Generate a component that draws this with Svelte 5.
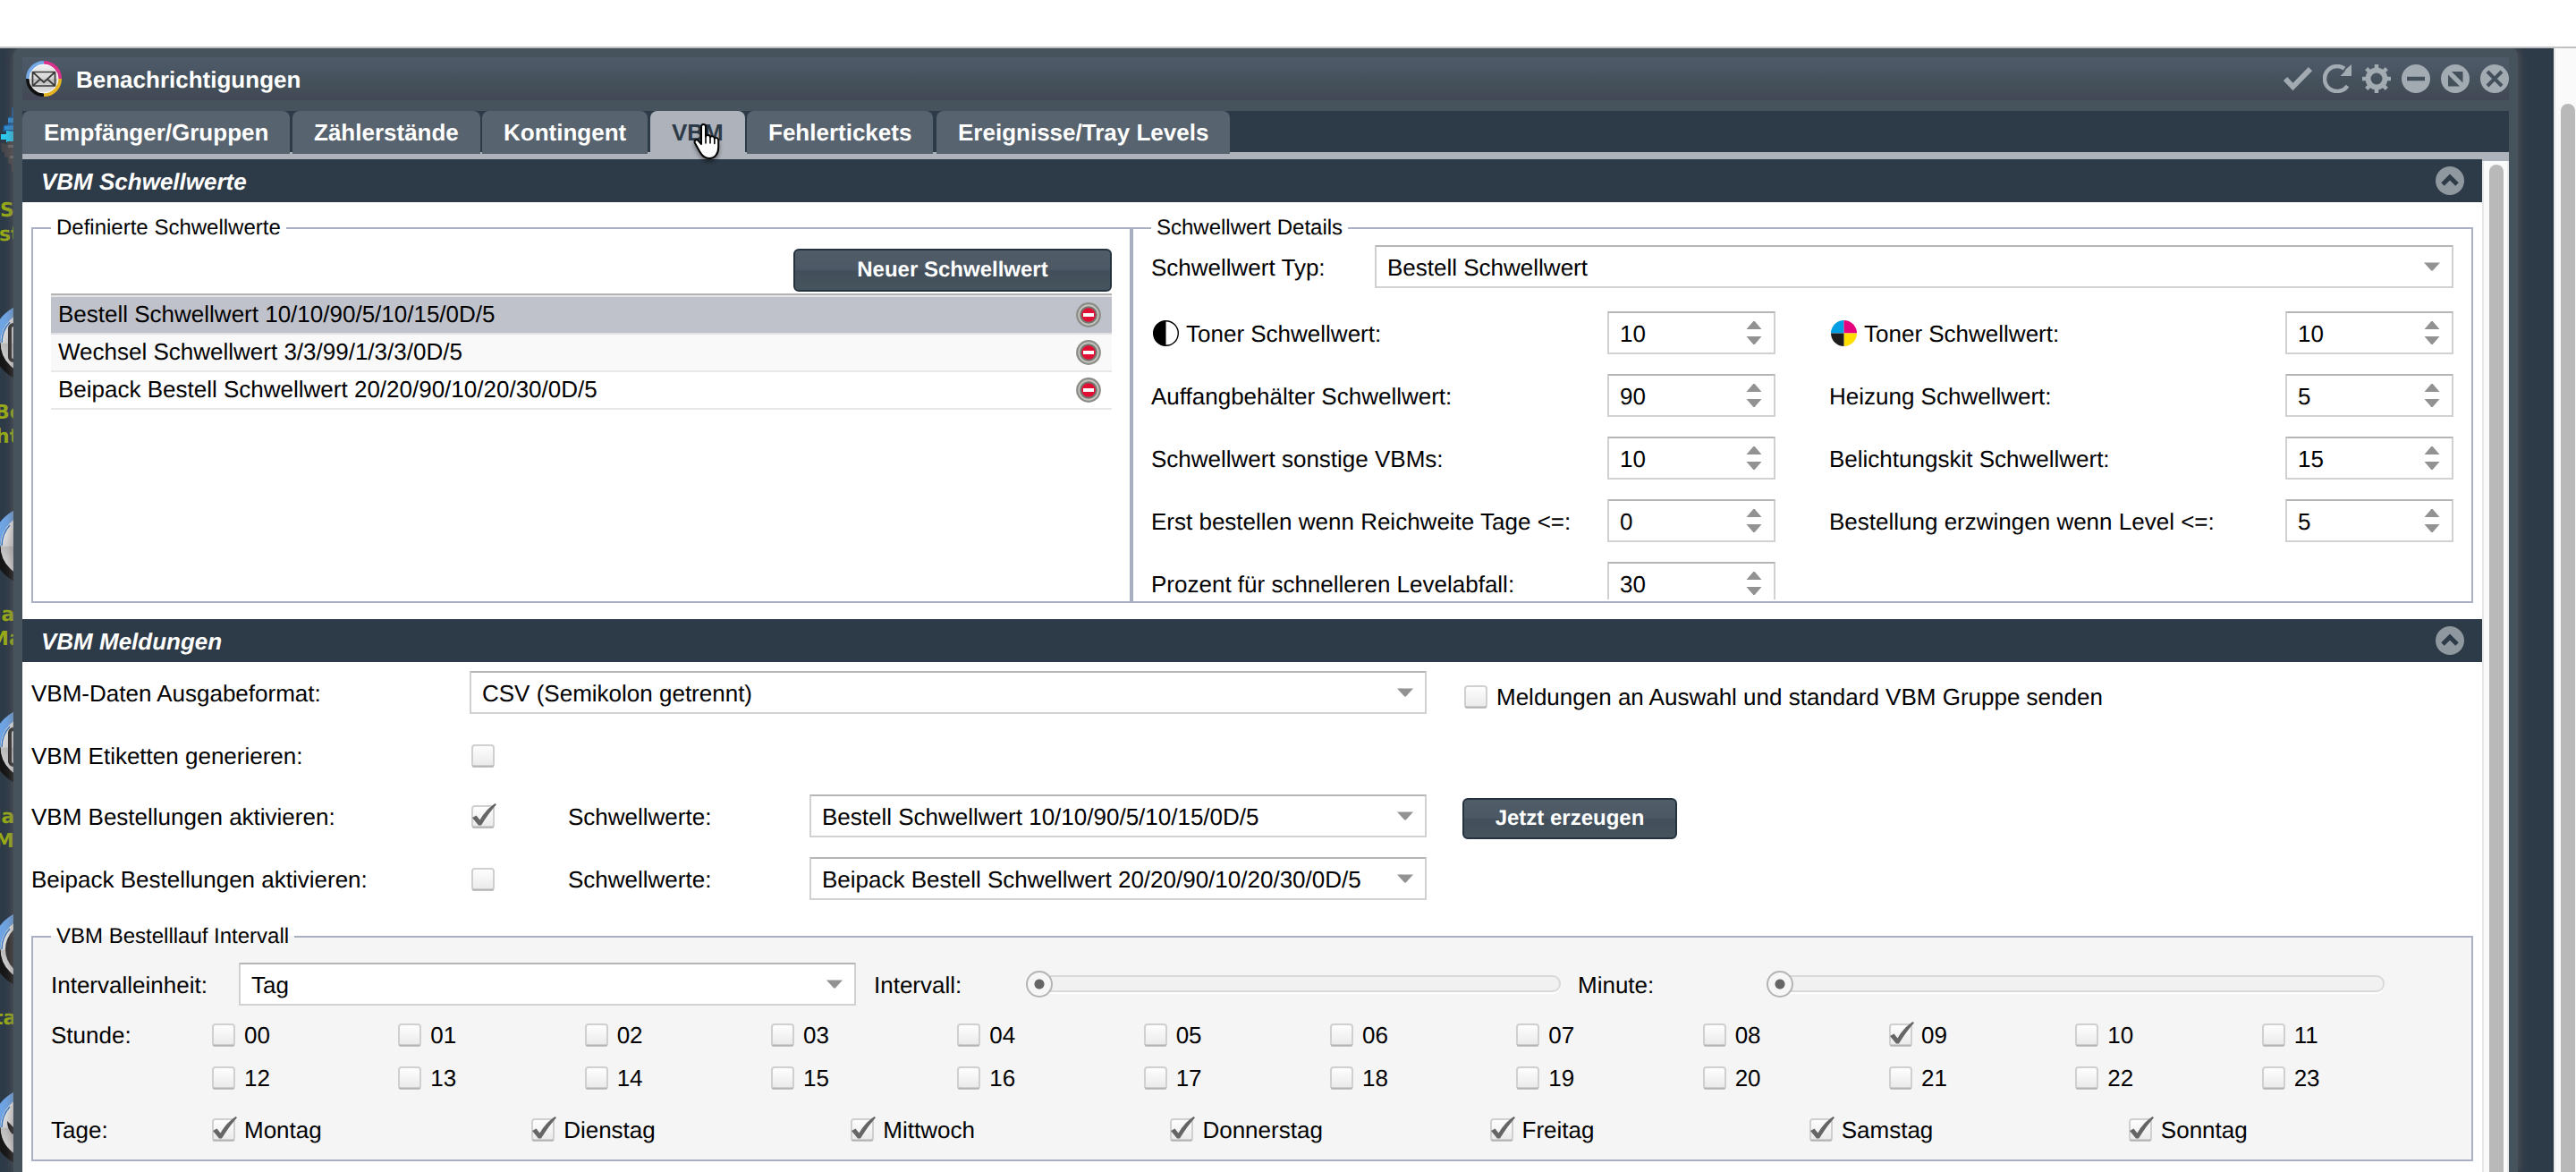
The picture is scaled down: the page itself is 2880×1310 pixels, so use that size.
<script>
  const tabs = [
    { label: 'Empfänger/Gruppen', w: 299, gap: 3 },
    { label: 'Zählerstände', w: 210, gap: 2 },
    { label: 'Kontingent', w: 185, gap: 3 },
    { label: 'VBM', w: 106, gap: 2, active: true },
    { label: 'Fehlertickets', w: 208, gap: 4 },
    { label: 'Ereignisse/Tray Levels', w: 328, gap: 0 },
  ];

  const thresholds = [
    'Bestell Schwellwert 10/10/90/5/10/15/0D/5',
    'Wechsel Schwellwert 3/3/99/1/3/3/0D/5',
    'Beipack Bestell Schwellwert 20/20/90/10/20/30/0D/5',
  ];

  const fields = [
    { label: 'Toner Schwellwert:', value: '10', icon: 'mono' },
    { label: 'Toner Schwellwert:', value: '10', icon: 'cmyk' },
    { label: 'Auffangbehälter Schwellwert:', value: '90' },
    { label: 'Heizung Schwellwert:', value: '5' },
    { label: 'Schwellwert sonstige VBMs:', value: '10' },
    { label: 'Belichtungskit Schwellwert:', value: '15' },
    { label: 'Erst bestellen wenn Reichweite Tage <=:', value: '0' },
    { label: 'Bestellung erzwingen wenn Level <=:', value: '5' },
    { label: 'Prozent für schnelleren Levelabfall:', value: '30' },
  ];

  const hours = Array.from({ length: 24 }, (_, i) => ({
    label: String(i).padStart(2, '0'),
    on: i === 9,
  }));

  const days = ['Montag', 'Dienstag', 'Mittwoch', 'Donnerstag', 'Freitag', 'Samstag', 'Sonntag'];

  const launchers = [343, 570, 795, 1021, 1220];
  const launcherTexts = [
    { text: 'S', x: 0, y: 223 },
    { text: 'st', x: -1, y: 250 },
    { text: 'Be', x: -6, y: 449 },
    { text: 'ht', x: -5, y: 476 },
    { text: 'la', x: -6, y: 675 },
    { text: 'Ma', x: -12, y: 702 },
    { text: 'la', x: -6, y: 901 },
    { text: 'M', x: -6, y: 928 },
    { text: 'ta', x: -7, y: 1126 },
  ];
</script>

{#snippet checkbox(on)}
  <svg class="check" width="26" height="26" viewBox="0 0 26 26">
    <rect x="1" y="1" width="24" height="24" rx="3" fill="url(#boxFill)" stroke="#d0d0d0" stroke-width="2" />
    <path d="M2 24.6h22" stroke="#b4b4b4" stroke-width="2" stroke-linecap="round" />
    {#if on}
      <path d="M1 14l4.500-2.600 4 5C14 9 19 3 26.500-2l1.500 1.200C22 6 16.500 13.500 11 22.500H8z" fill="#666" />
    {/if}
  </svg>
{/snippet}

{#snippet combo(text)}
  <div class="combo">
    <span>{text}</span>
    <svg width="18" height="10" viewBox="0 0 18 10"><path d="M0 0.500h18L9.800 9.500h-1.600z" fill="#929292" /></svg>
  </div>
{/snippet}

{#snippet header(text)}
  <div class="section-head">
    <span>{text}</span>
    <svg width="32" height="32" viewBox="0 0 32 32">
      <circle cx="16" cy="16" r="16" fill="#8f979f" />
      <path d="M8 20l8-8 8 8" fill="none" stroke="#2d3a47" stroke-width="5" />
    </svg>
  </div>
{/snippet}

{#snippet slider()}
  <div class="slider">
    <div class="track"></div>
    <div class="knob"></div>
  </div>
{/snippet}

<svg class="defs" width="0" height="0">
  <defs>
    <linearGradient id="boxFill" x1="0" y1="0" x2="0" y2="1">
      <stop offset="0" stop-color="#fff" />
      <stop offset="1" stop-color="#e9e9e9" />
    </linearGradient>
    <linearGradient id="disc" x1="0" y1="0" x2="0" y2="1">
      <stop offset="0" stop-color="#f4f4f4" />
      <stop offset="0.5" stop-color="#d5d5d5" />
      <stop offset="0.52" stop-color="#bcbcbc" />
      <stop offset="1" stop-color="#e6e6e6" />
    </linearGradient>
  </defs>
</svg>

<div class="page">
  <div class="topbar"></div>
  <div class="desk">
    <div class="strip">
      <svg class="gears" width="15" height="80" viewBox="0 0 15 80">
        <path d="M15 2l-2 1v9l-4 1v8l-5 1-1 7h12z" fill="#1c5f9e" />
        <path d="M15 14H9v5h6zM15 22l-10 1v4h10z" fill="#2f8fd6" />
        <path d="M15 29l-8-1v4H1v6h6v3h8z" fill="#2ccbf2" />
        <path d="M1 42l7 1v-3h7v34l-2-1v-7l-4-2v-6l-4-1v-5H2z" fill="#48484c" />
        <path d="M9 44h6v3H9zM11 56h4v3h-4z" fill="#6a6a6d" />
      </svg>
      {#each launchers as top}
        <svg class="launcher" style:top="{top - 59}px" width="90" height="90" viewBox="0 0 90 90">
          <circle cx="45" cy="45" r="36" fill="url(#disc)" />
          <path d="M5 45A40 40 0 0 1 45 5" fill="none" stroke="#6fa5e4" stroke-width="9" />
          <path d="M5 45A40 40 0 0 0 45 85" fill="none" stroke="#161616" stroke-width="9" />
          <path d="M11 45A34 34 0 0 1 20 22" fill="none" stroke="#3b78c0" stroke-width="1.500" />
          {#if top === 343 || top === 795}
            <rect x="20" y="25" width="40" height="40" rx="4" fill="none" stroke="#333" stroke-width="4" />
          {/if}
          {#if top === 1021}
            <circle cx="45" cy="45" r="30" fill="#333" />
          {/if}
          {#if top === 1220}
            <path d="M17 38l10 10-4 5c-4-4-6-9-6-15z" fill="#222" />
          {/if}
        </svg>
      {/each}
      {#each launcherTexts as t}
        <span class="caption" style:left="{t.x}px" style:top="{t.y - 54}px">{t.text}</span>
      {/each}
    </div>

    <div class="window">
      <div class="title">
        <svg class="logo" width="40" height="40" viewBox="0 0 40 40">
          <circle cx="20" cy="20" r="17" fill="url(#disc)" />
          <path d="M2 20A18 18 0 0 1 20 2" fill="none" stroke="#74a9e6" stroke-width="4" />
          <path d="M20 2A18 18 0 0 1 38 20" fill="none" stroke="#d8348c" stroke-width="4" />
          <path d="M38 20A18 18 0 0 1 20 38" fill="none" stroke="#e3b321" stroke-width="4" />
          <path d="M20 38A18 18 0 0 1 2 20" fill="none" stroke="#111" stroke-width="4" />
          <circle cx="20" cy="20" r="16" fill="none" stroke="#fff" stroke-width="1" />
          <path d="M7.500 12.500h25v15.500h-25zM7.500 12.500L20 24l12.500-11.500M7.500 28l9-8M32.500 28l-9-8" fill="none" stroke="#3a3a3a" stroke-width="1.700" />
        </svg>
        <span class="title-text">Benachrichtigungen</span>
        <div class="tools">
          <svg width="32" height="32" viewBox="0 0 32 32"><path d="M2 16l8.500 9L30 5" fill="none" stroke="#a2aab2" stroke-width="6" /></svg>
          <svg width="32" height="32" viewBox="0 0 32 32"><path d="M27.500 24A14 14 0 1 1 24 4.600" fill="none" stroke="#a2aab2" stroke-width="4.500" /><path d="M32 0v13H19.500l4.500-4.500 2-3.500z" fill="#a2aab2" /></svg>
          <svg width="32" height="32" viewBox="0 0 32 32">
            <circle cx="16" cy="16" r="9.500" fill="none" stroke="#a2aab2" stroke-width="6" />
            <path d="M16 0v5M16 27v5M0 16h5M27 16h5M4.700 4.700L8.500 8.500M23.500 23.500l3.800 3.800M4.700 27.300l3.800-3.800M23.500 8.500l3.800-3.800" stroke="#a2aab2" stroke-width="4.500" />
          </svg>
          <svg width="32" height="32" viewBox="0 0 32 32"><circle cx="16" cy="16" r="16" fill="#a2aab2" /><path d="M6 16h20" stroke="#44505b" stroke-width="4.500" /></svg>
          <svg width="32" height="32" viewBox="0 0 32 32"><circle cx="16" cy="16" r="16" fill="#a2aab2" /><path d="M12 8h12.500v12.500zM8 11.500v13h13z" fill="#44505b" /></svg>
          <svg width="32" height="32" viewBox="0 0 32 32"><circle cx="16" cy="16" r="16" fill="#a2aab2" /><path d="M8 8l16 16M24 8L8 24" stroke="#44505b" stroke-width="4" /></svg>
        </div>
      </div>

      <div class="tabbar">
        {#each tabs as tab}
          <div class="tab" class:active={tab.active} style:width="{tab.w}px" style:margin-right="{tab.gap}px">{tab.label}</div>
        {/each}
        <svg class="cursor" width="34" height="44" viewBox="0 0 34 44">
          <path
            d="M10 4.500c0-3.500 5-3.500 5 0v11c1-2.200 5-1.800 5 .8 1-1.800 4.700-1.200 4.800 1.400 1.200-1.500 4.400-.7 4.400 2.300v7.500c0 7-3.600 12.500-10.400 12.500-5.500 0-8-3-10.500-7.500L3 23c-1.500-3 1.700-5 4-2.500l3 3.500z"
            fill="#fff" stroke="#000" stroke-width="2" stroke-linejoin="round"
          />
          <path d="M15 15v8M20 16.500v6.500M24.800 18v5.500" stroke="#000" stroke-width="1.600" stroke-linecap="round" />
        </svg>
      </div>

      <div class="body">
        <div class="content">
          {@render header('VBM Schwellwerte')}
          <div class="split">
            <fieldset class="list-set">
              <legend>Definierte Schwellwerte</legend>
              <div class="btn new">Neuer Schwellwert</div>
              <div class="list">
                {#each thresholds as item, i}
                  <div class="row" class:selected={i === 0} class:alt={i === 1}>
                    <span>{item}</span>
                    <svg width="28" height="28" viewBox="0 0 28 28">
                      <circle cx="14" cy="14" r="12.800" fill="#c4c4bf" stroke="#8b8b87" stroke-width="2.200" />
                      <circle cx="14" cy="14" r="8.800" fill="#e00f33" stroke="#747470" stroke-width="2" />
                      <rect x="8" y="12" width="12" height="4" fill="#fff" />
                    </svg>
                  </div>
                {/each}
              </div>
            </fieldset>

            <fieldset class="detail-set">
              <legend>Schwellwert Details</legend>
              <div class="detail-body">
                <div class="type-row">
                  <span class="lbl">Schwellwert Typ:</span>
                  {@render combo('Bestell Schwellwert')}
                </div>
                <div class="fields">
                  {#each fields as f}
                    <div class="field">
                      <span class="lbl">
                        {#if f.icon === 'mono'}
                          <svg width="29" height="29" viewBox="0 0 29 29"><circle cx="14.500" cy="14.500" r="13.800" fill="#fff" stroke="#000" stroke-width="1.400" /><path d="M14.500 0.500a14 14 0 0 0 0 28z" /></svg>
                        {:else if f.icon === 'cmyk'}
                          <svg width="29" height="29" viewBox="0 0 29 29">
                            <path d="M14.500 14.500V0A14.500 14.500 0 0 0 0 14.500z" fill="#009fe3" />
                            <path d="M14.500 14.500V0A14.500 14.500 0 0 1 29 14.500z" fill="#e6007e" />
                            <path d="M14.500 14.500V29A14.500 14.500 0 0 0 29 14.500z" fill="#ffde00" />
                            <path d="M14.500 14.500V29A14.500 14.500 0 0 1 0 14.500z" fill="#1d1d1b" />
                          </svg>
                        {/if}
                        {f.label}
                      </span>
                      <div class="spin">
                        <span>{f.value}</span>
                        <svg width="18" height="28" viewBox="0 0 18 28"><path d="M0.500 10h17L9.700 1h-1.400zM0.500 18h17L9.700 27h-1.400z" fill="#929292" /></svg>
                      </div>
                    </div>
                  {/each}
                </div>
              </div>
            </fieldset>
          </div>

          {@render header('VBM Meldungen')}
          <div class="messages">
            <div class="line">
              <span class="lbl first">VBM-Daten Ausgabeformat:</span>
              <div class="wide">{@render combo('CSV (Semikolon getrennt)')}</div>
              <div class="opt group">{@render checkbox(false)}<span>Meldungen an Auswahl und standard VBM Gruppe senden</span></div>
            </div>
            <div class="line">
              <span class="lbl first">VBM Etiketten generieren:</span>
              <div class="cell">{@render checkbox(false)}</div>
            </div>
            <div class="line">
              <span class="lbl first">VBM Bestellungen aktivieren:</span>
              <div class="cell">{@render checkbox(true)}</div>
              <span class="lbl second">Schwellwerte:</span>
              <div class="mid">{@render combo('Bestell Schwellwert 10/10/90/5/10/15/0D/5')}</div>
              <div class="btn create">Jetzt erzeugen</div>
            </div>
            <div class="line">
              <span class="lbl first">Beipack Bestellungen aktivieren:</span>
              <div class="cell">{@render checkbox(false)}</div>
              <span class="lbl second">Schwellwerte:</span>
              <div class="mid">{@render combo('Beipack Bestell Schwellwert 20/20/90/10/20/30/0D/5')}</div>
            </div>

            <fieldset class="interval">
              <legend>VBM Bestelllauf Intervall</legend>
              <div class="unit">
                <span class="lbl">Intervalleinheit:</span>
                <div class="mid">{@render combo('Tag')}</div>
                <span class="lbl iv">Intervall:</span>
                <div class="sl1">{@render slider()}</div>
                <span class="lbl mn">Minute:</span>
                <div class="sl2">{@render slider()}</div>
              </div>
              <div class="times">
                <span class="side">Stunde:</span>
                <div class="hours">
                  {#each hours as h}
                    <div class="opt">{@render checkbox(h.on)}<span>{h.label}</span></div>
                  {/each}
                </div>
              </div>
              <div class="times weekdays">
                <span class="side">Tage:</span>
                <div class="days">
                  {#each days as d}
                    <div class="opt">{@render checkbox(true)}<span>{d}</span></div>
                  {/each}
                </div>
              </div>
            </fieldset>
          </div>
        </div>
        <div class="scroll inner"><div class="thumb"></div></div>
      </div>
    </div>

    <div class="rest"></div>
    <div class="scroll outer"><div class="thumb"></div></div>
  </div>
</div>

<style>
  :global(body) {
    background: #fff;
  }
  .defs {
    position: absolute;
  }
  .page {
    width: 2880px;
    height: 1310px;
    overflow: hidden;
    display: flex;
    flex-direction: column;
    font-family: 'Liberation Sans', Arial, sans-serif;
    font-size: 26px;
    line-height: 30px;
    color: #000;
    text-rendering: geometricPrecision;
    white-space: nowrap;
  }
  .page :global(svg) {
    display: block;
    flex: none;
  }
  .topbar {
    height: 52px;
    flex: none;
    border-bottom: 2px solid #bfc1c2;
    background: #fff;
  }
  .desk {
    flex: 1;
    min-height: 0;
    display: flex;
    background: #2d3a47;
    overflow: hidden;
  }
  .strip {
    width: 15px;
    flex: none;
    position: relative;
    overflow: hidden;
  }
  .gears {
    position: absolute;
    left: 0;
    top: 64px;
  }
  .launcher {
    position: absolute;
    left: -9px;
  }
  .caption {
    position: absolute;
    font-family: 'DejaVu Sans', sans-serif;
    font-weight: bold;
    font-size: 22px;
    line-height: 26px;
    color: #98ab17;
  }

  .window {
    width: 2780px;
    flex: none;
    display: flex;
    flex-direction: column;
    padding: 10px 10px 0;
    background: #46535d;
    border-radius: 8px 8px 0 0;
    box-shadow: 0 0 12px rgba(110, 100, 100, 0.75);
    position: relative;
  }
  .title {
    height: 48px;
    flex: none;
    display: flex;
    align-items: center;
    padding-left: 4px;
    background: linear-gradient(#4e5a68 0%, #4b5765 25%, #44515b 55%, #434d58 78%, #444757 92%, #434856 100%);
    color: #fff;
    font-weight: bold;
  }
  .title-text {
    margin-left: 16px;
    padding-top: 2px;
    flex: 1;
  }
  .tools {
    display: flex;
    gap: 12px;
  }
  .tabbar {
    height: 46px;
    flex: none;
    margin-top: 12px;
    display: flex;
    position: relative;
    background: #2d3a47;
    border-bottom: 8px solid #adb2bb;
  }
  .tab {
    height: 48px;
    box-sizing: border-box;
    flex: none;
    padding: 9px 0 0 24px;
    background: #57636e;
    border-radius: 8px 8px 0 0;
    color: #fff;
    font-weight: bold;
  }
  .tab.active {
    background: #adb2bb;
    color: #2d3a47;
  }
  .cursor {
    position: absolute;
    left: 749px;
    top: 13px;
    filter: drop-shadow(0 3px 2px rgba(0, 0, 0, 0.4));
  }

  .body {
    flex: 1;
    min-height: 0;
    display: flex;
    background: #fff;
  }
  .content {
    width: 2750px;
    flex: none;
    background: #fff;
  }
  .section-head {
    height: 48px;
    box-sizing: border-box;
    display: flex;
    align-items: center;
    justify-content: space-between;
    padding: 0 20px 0 21px;
    background: #2d3a47;
    color: #fff;
    font-weight: bold;
    font-style: italic;
  }
  .section-head span {
    padding-top: 1px;
  }

  .scroll {
    box-sizing: border-box;
    background: #fafafa;
    border-left: 2px solid #e6e6e6;
    flex: none;
  }
  .scroll .thumb {
    width: 16px;
    height: 1300px;
    margin-left: 6px;
    border-radius: 8px;
    background: #b9b9b9;
  }
  .inner {
    width: 30px;
    border-right: 2px solid #ececec;
    padding-top: 4px;
    margin-top: 2px;
    overflow: hidden;
    box-shadow: 0 -2px #adb2bb;
  }
  .rest {
    width: 40px;
    flex: none;
  }
  .outer {
    width: 25px;
    padding-top: 62px;
    position: relative;
  }

  fieldset {
    box-sizing: border-box;
    margin: 0;
    border: 2px solid #abafc2;
    padding: 0 20px;
    min-width: 0;
  }
  legend {
    font-size: 24px;
    line-height: 28px;
    height: 28px;
    padding: 0 6px;
  }
  .split {
    display: flex;
    padding: 15px 10px 18px;
  }
  .list-set {
    width: 1230px;
    height: 433px;
  }
  .detail-set {
    width: 1500px;
    height: 433px;
  }
  .btn {
    box-sizing: border-box;
    display: flex;
    align-items: center;
    justify-content: center;
    border: 2px solid #25323f;
    border-radius: 6px;
    background: linear-gradient(#505d68 0%, #4c5865 48%, #424f5a 52%, #46545e 100%);
    color: #fff;
    font-weight: bold;
    font-size: 24px;
  }
  .new {
    width: 356px;
    height: 48px;
    margin: 9px 0 2px auto;
  }
  .list {
    border-top: 2px solid #b3b3b3;
    padding-top: 2px;
    background: #e6e6e9;
  }
  .row {
    height: 40px;
    display: flex;
    justify-content: space-between;
    align-items: center;
    padding: 0 12px 0 8px;
    border-bottom: 2px solid #e8e8e8;
    background: #fff;
  }
  .row span {
    padding-bottom: 2px;
  }
  .row.selected {
    background: #bfc2ca;
    border-color: #e0e1e6;
  }
  .row.alt {
    background: #f9f9f9;
  }

  .detail-body {
    padding-top: 5px;
    height: 396px;
    overflow: hidden;
  }
  .lbl {
    display: flex;
    align-items: center;
    padding-top: 2px;
  }
  .lbl :global(svg) {
    margin: -2px 8px 0 2px;
  }
  .type-row {
    display: grid;
    grid-template-columns: 250px 1fr;
    height: 48px;
  }
  .combo,
  .spin {
    box-sizing: border-box;
    width: 100%;
    height: 48px;
    display: flex;
    align-items: center;
    justify-content: space-between;
    padding: 0 13px 0 12px;
    border: 2px solid #d1d1d1;
    border-top-color: #b5b5b5;
    background: #fff;
  }
  .combo span,
  .spin span {
    padding-top: 2px;
  }
  .fields {
    display: grid;
    grid-template-columns: 698px 698px;
    column-gap: 60px;
    row-gap: 22px;
    margin-top: 26px;
  }
  .field {
    display: grid;
    grid-template-columns: 510px 188px;
    height: 48px;
  }

  .messages {
    padding: 10px 10px 0;
  }
  .line {
    display: flex;
    height: 48px;
    margin-bottom: 22px;
  }
  .line:nth-child(2) {
    margin-bottom: 20px;
  }
  .line:nth-child(4) {
    margin-bottom: 27px;
  }
  .first {
    width: 490px;
    flex: none;
  }
  .wide {
    width: 1070px;
    flex: none;
  }
  .cell {
    width: 108px;
    flex: none;
    padding: 12px 0 0 2px;
  }
  .second {
    width: 270px;
    flex: none;
  }
  .mid {
    width: 690px;
    flex: none;
  }
  .create {
    width: 240px;
    height: 46px;
    margin: 4px 0 0 40px;
  }
  .opt {
    display: flex;
    align-items: center;
    height: 26px;
  }
  .opt span {
    margin-left: 10px;
  }
  .group {
    margin: 16px 0 0 42px;
  }
  .check {
    overflow: visible;
  }

  .interval {
    background: #f5f5f5;
    height: 265px;
  }
  .unit {
    display: flex;
    height: 48px;
    margin-top: 15px;
  }
  .unit .lbl {
    width: 210px;
    flex: none;
  }
  .unit .iv {
    width: 170px;
    margin-left: 20px;
  }
  .unit .mn {
    margin-left: 19px;
    width: 211px;
  }
  .sl1 {
    width: 598px;
    flex: none;
  }
  .sl2 {
    width: 691px;
    flex: none;
  }
  .slider {
    height: 48px;
    display: flex;
    align-items: center;
  }
  .track {
    box-sizing: border-box;
    flex: 1;
    height: 19px;
    margin-top: -1px;
    border: 2px solid #d9d9d9;
    border-radius: 9px;
    background: #f1f1f1;
    box-shadow: 0 2px 1px #fff;
  }
  .knob {
    box-sizing: border-box;
    order: -1;
    position: relative;
    width: 30px;
    height: 30px;
    margin-right: -30px;
    border: 2px solid #b4b4b4;
    border-radius: 50%;
    background: radial-gradient(circle, #666 0 5px, #f6f6f6 6px);
  }
  .times {
    display: flex;
    margin-top: 20px;
  }
  .weekdays {
    margin-top: 32px;
  }
  .side {
    width: 180px;
    height: 26px;
    line-height: 26px;
    flex: none;
  }
  .hours {
    width: 2500px;
    display: grid;
    grid-template-columns: repeat(12, 1fr);
    row-gap: 22px;
  }
  .days {
    width: 2500px;
    display: grid;
    grid-template-columns: repeat(7, 1fr);
  }
</style>
